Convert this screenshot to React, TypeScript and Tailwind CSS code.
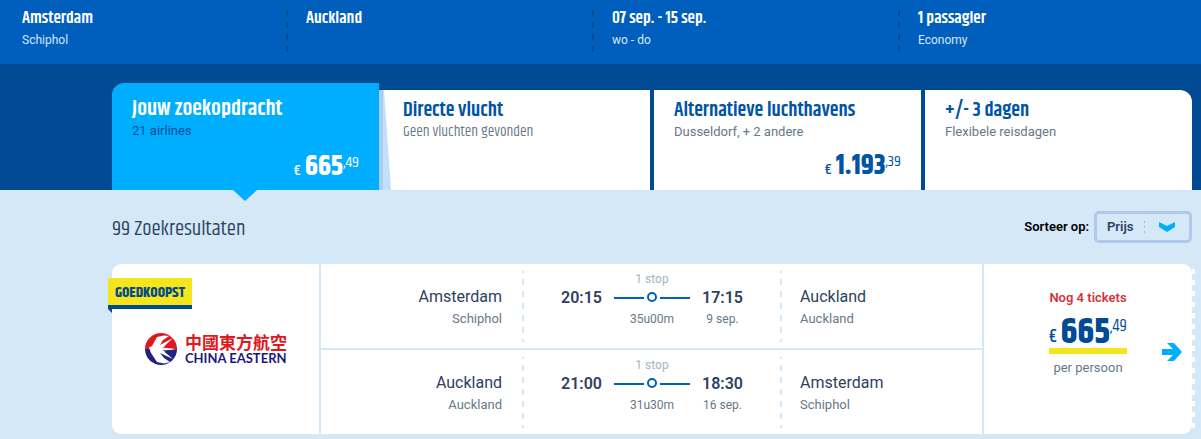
import { clsx } from 'clsx'

const searchFields = [
  { title: 'Amsterdam', detail: 'Schiphol' },
  { title: 'Auckland', detail: '' },
  { title: '07 sep. - 15 sep.', detail: 'wo - do' },
  { title: '1 passagier', detail: 'Economy' },
]

const flights = [
  {
    from: 'Amsterdam',
    fromAirport: 'Schiphol',
    departure: '20:15',
    duration: '35u00m',
    arrival: '17:15',
    arrivalDate: '9 sep.',
    to: 'Auckland',
    toAirport: 'Auckland',
  },
  {
    from: 'Auckland',
    fromAirport: 'Auckland',
    departure: '21:00',
    duration: '31u30m',
    arrival: '18:30',
    arrivalDate: '16 sep.',
    to: 'Amsterdam',
    toAirport: 'Schiphol',
  },
]

type Flight = (typeof flights)[number]

function SearchBar() {
  return (
    <header className="grid h-16 grid-cols-[288fr_306fr_306fr_301fr] bg-[#005fbd] text-white">
      {searchFields.map((field, i) => (
        <div key={field.title} className={clsx('flex justify-between pt-[6px]', i === 0 ? 'pl-[22px]' : 'pl-[18px]')}>
          <div>
            <div className="font-[Khand,sans-serif] text-[17px] leading-6 font-semibold">{field.title}</div>
            <div className="mt-[2px] text-xs leading-4 text-[#d5e8f7]">{field.detail}</div>
          </div>
          {i < 3 && (
            <div className="mt-1 h-[42px] w-[2px] bg-[repeating-linear-gradient(#004b93_0_6px,transparent_6px_12px)]" />
          )}
        </div>
      ))}
    </header>
  )
}

function Price({ whole, cents }: { whole: string; cents: string }) {
  return (
    <div className="flex items-start justify-end font-[Khand,sans-serif] leading-8">
      <span className="mt-1 mr-1 text-base leading-8 font-medium">€</span>
      <span className="text-[28px] font-bold">{whole}</span>
      <span className="text-base leading-6">,{cents}</span>
    </div>
  )
}

function Tabs() {
  return (
    <nav className="bg-[#004b93] pt-[19px] pr-[9px] pl-28">
      <div className="grid grid-cols-4 items-end gap-1">
        <button className="relative flex h-[107px] flex-col rounded-tl-xl bg-[#00aeff] pt-3 pr-5 pl-5 text-left text-white">
          <span className="font-[Khand,sans-serif] text-[22px] leading-7 font-semibold">Jouw zoekopdracht</span>
          <span className="text-[13px] leading-4 text-[#004b93]">21 airlines</span>
          <div className="mt-3 self-end">
            <Price whole="665" cents="49" />
          </div>
          <svg className="absolute top-full left-[121px] h-[11px] w-6" viewBox="0 0 24 11" fill="#00aeff">
            <path d="M0 0h24L12 11z" />
          </svg>
        </button>

        <button className="relative flex h-[100px] flex-col bg-white pt-2 pl-5 text-left">
          {/* slanted side of the active tab */}
          <svg className="absolute top-0 -left-1 h-full w-3" viewBox="0 0 12 100" preserveAspectRatio="none">
            <path d="M0 0h5l7 100H0z" fill="#c2dffb" />
            <path d="M0 0h4v100H0z" fill="#aecdf0" />
          </svg>
          <span className="font-[Khand,sans-serif] text-xl leading-[26px] font-semibold text-[#0054a6]">Directe vlucht</span>
          <span className="font-[Khand,sans-serif] text-[15px] leading-4 text-[#66788a]">Geen vluchten gevonden</span>
        </button>

        <button className="flex h-[100px] flex-col bg-white pt-2 pr-5 pl-5 text-left">
          <span className="font-[Khand,sans-serif] text-xl leading-[26px] font-semibold text-[#0054a6]">
            Alternatieve luchthavens
          </span>
          <span className="text-[13px] leading-4 text-[#66788a]">Dusseldorf, + 2 andere</span>
          <div className="mt-[10px] self-end text-[#0054a6]">
            <Price whole="1.193" cents="39" />
          </div>
        </button>

        <button className="flex h-[100px] flex-col rounded-tr-xl bg-white pt-2 pl-5 text-left">
          <span className="font-[Khand,sans-serif] text-xl leading-[26px] font-semibold text-[#0054a6]">+/- 3 dagen</span>
          <span className="text-[13px] leading-4 text-[#66788a]">Flexibele reisdagen</span>
        </button>
      </div>
    </nav>
  )
}

function SortBy() {
  return (
    <div className="flex items-center gap-[5px] text-[13px] font-semibold">
      <label htmlFor="sort" className="text-black">
        Sorteer op:
      </label>
      <div className="relative">
        <select
          id="sort"
          defaultValue="prijs"
          className="block h-8 w-[98px] appearance-none rounded-[5px] border-3 border-[#aec9ea] bg-transparent pl-[10px] text-[#2d4262]"
        >
          <option value="prijs">Prijs</option>
          <option value="reistijd">Reistijd</option>
        </select>
        <svg className="pointer-events-none absolute top-[10px] right-[17px] h-3 w-[31px]" viewBox="0 0 31 12">
          <path d="M.5 0v12" stroke="#9cc3e6" strokeDasharray="2 3" />
          <path d="M15 1l8 4 8-4v5l-8 5-8-5z" fill="#00aeff" />
        </svg>
      </div>
    </div>
  )
}

function AirlineLogo() {
  return (
    <div className="flex items-center gap-2">
      <svg className="size-8" viewBox="0 0 32 32">
        <path d="M0 16a16 16 0 0 1 32 0z" fill="#e0191f" />
        <path d="M0 16a16 16 0 0 0 32 0z" fill="#22227f" />
        <path
          d="M4 14.500l3-1.500 5-9 7-1.500 5 .5-6 4-3 5L28 5l-9 8.500L32 16l-13 2.500 9 7.500-13-6 4 5 6 4-6 1.500-7-1.500-6-9z"
          fill="#fff"
        />
        <path d="M17 14.500l13-4 1.500 5.500z" fill="#e0191f" />
        <path d="M17 17.500l13 3 1.500-4z" fill="#22227f" />
      </svg>
      <div className="whitespace-nowrap">
        <div className="font-['Noto_Sans_CJK_TC',sans-serif] text-[17px] leading-[17px] font-bold text-[#e0191f]">
          中國東方航空
        </div>
        <div className="pt-[2px] font-[Lato,sans-serif] text-[13px] leading-[13px] font-bold text-[#19197d]">
          CHINA EASTERN
        </div>
      </div>
    </div>
  )
}

function DashedLine() {
  return (
    <div className="mt-[7px] mb-[6px] w-[2px] bg-[repeating-linear-gradient(#d5e8f7_0_2px,transparent_2px_8px,#d5e8f7_8px_12px)]" />
  )
}

function Leg({ flight }: { flight: Flight }) {
  return (
    <div className="grid h-[84px] grid-cols-[201fr_2px_256px_2px_200fr] bg-white text-[#2d4262]">
      <div className="pt-[22px] pr-5 text-right">
        <div className="text-base leading-[22px]">{flight.from}</div>
        <div className="text-[13px] leading-[22px] text-[#66788a]">{flight.fromAirport}</div>
      </div>
      <DashedLine />
      <div className="flex justify-center gap-3 pt-2">
        <div className="pt-[15px] text-base leading-[22px] font-semibold">{flight.departure}</div>
        <div className="flex w-[76px] flex-col items-center">
          <span className="text-xs leading-[15px] text-[#a5b4c3]">1 stop</span>
          <svg className="h-[22px] w-[76px]" viewBox="0 0 76 22" fill="none" stroke="#005fbd" strokeWidth="2">
            <path d="M0 11h30M46 11h30" />
            <circle cx="38" cy="10" r="4" />
          </svg>
          <span className="text-xs leading-5 text-[#66788a]">{flight.duration}</span>
        </div>
        <div className="pt-[15px] text-center">
          <div className="text-base leading-[22px] font-semibold">{flight.arrival}</div>
          <div className="text-xs leading-5 text-[#66788a]">{flight.arrivalDate}</div>
        </div>
      </div>
      <DashedLine />
      <div className="pt-[22px] pl-[18px]">
        <div className="text-base leading-[22px]">{flight.to}</div>
        <div className="text-[13px] leading-[22px] text-[#66788a]">{flight.toAirport}</div>
      </div>
    </div>
  )
}

function ResultCard() {
  return (
    <article className="relative mt-[21px] flex h-[170px] rounded-[9px] bg-white">
      <div className="flex w-[207px] items-center pl-[33px]">
        <AirlineLogo />
      </div>
      <div className="absolute top-[14px] -left-1">
        <div className="border-b-4 border-[#004b88] bg-[#f6e41d] px-[7px] pt-[2px] font-[Khand,sans-serif] text-[15px] leading-[25px] font-bold text-[#004b88]">
          GOEDKOOPST
        </div>
        <svg className="h-1 w-1" viewBox="0 0 4 4" fill="#004b88">
          <path d="M0 0h4v4z" />
        </svg>
      </div>

      <div className="flex flex-1 flex-col gap-[2px] bg-[#d5e8f7] px-[2px]">
        {flights.map((flight) => (
          <Leg key={flight.departure} flight={flight} />
        ))}
      </div>

      <div className="relative w-52">
        <div className="flex flex-col items-center pt-6">
          <span className="text-[13px] leading-5 font-semibold text-[#d0353c]">Nog 4 tickets</span>
          <div className="flex h-[46px] border-b-6 border-[#f6e41d] font-[Khand,sans-serif] text-[#004b93]">
            <span className="mr-1 text-lg leading-[58px] font-medium">€</span>
            <span className="text-4xl leading-[50px] font-bold">665</span>
            <span className="text-[17px] leading-9">,49</span>
          </div>
          <span className="mt-1 text-[13px] leading-5 text-[#66788a]">per persoon</span>
        </div>
        <button aria-label="Bekijk" className="absolute top-[79px] right-[10px]">
          <svg className="h-[18px] w-5" viewBox="0 0 20 18" fill="#00aeff">
            <path d="M0 6h11L5 0h7l8 9-8 9H5l6-6H0z" />
          </svg>
        </button>
      </div>
      {/* ticket perforation */}
      <div className="absolute top-[5px] bottom-1 left-full w-[3px] bg-[repeating-linear-gradient(#fff_0_5px,transparent_5px_11px)]" />
    </article>
  )
}

export default function App() {
  return (
    <div className="min-h-screen bg-[#d5e8f7] font-[Roboto,sans-serif]">
      <SearchBar />
      <Tabs />
      <main className="pt-[21px] pr-[9px] pb-[5px] pl-28">
        <div className="flex items-center justify-between">
          <h1 className="pt-1 font-[Khand,sans-serif] text-[21px] leading-7 text-[#2d4262]">99 Zoekresultaten</h1>
          <SortBy />
        </div>
        <ResultCard />
      </main>
    </div>
  )
}
